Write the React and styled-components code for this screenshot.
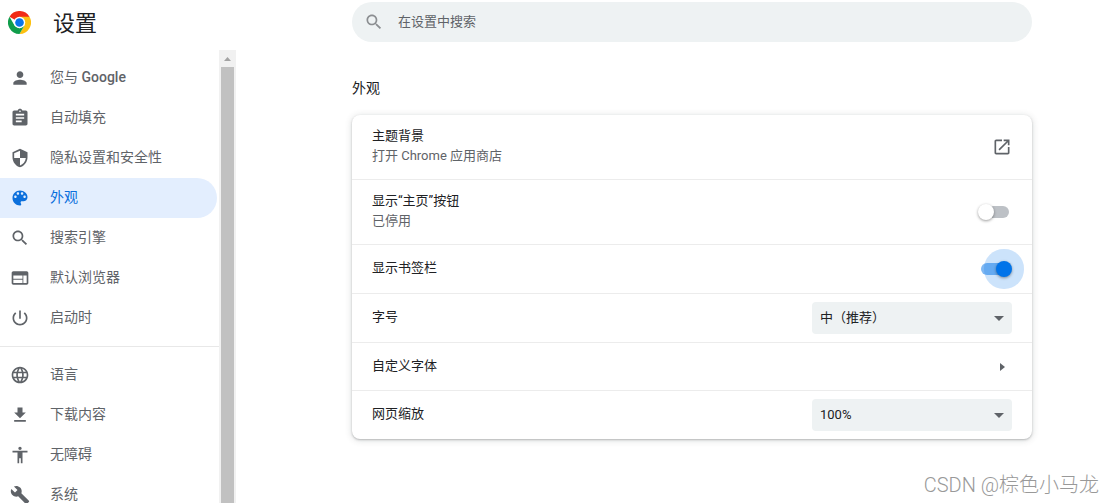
import React, { useState } from "react";
import styled, { createGlobalStyle } from "styled-components";

const icons = {
  person: "M12 12c2.21 0 4-1.79 4-4s-1.79-4-4-4-4 1.79-4 4 1.79 4 4 4zm0 2c-2.67 0-8 1.34-8 4v2h16v-2c0-2.66-5.33-4-8-4z",
  autofill: "M19 3h-4.18C14.4 1.84 13.3 1 12 1c-1.3 0-2.4.84-2.82 2H5c-1.1 0-2 .9-2 2v14c0 1.1.9 2 2 2h14c1.1 0 2-.9 2-2V5c0-1.1-.9-2-2-2zm-7 0c.55 0 1 .45 1 1s-.45 1-1 1-1-.45-1-1 .45-1 1-1zm2 14H7v-2h7v2zm3-4H7v-2h10v2zm0-4H7V7h10v2z",
  security: "M12 1L3 5v6c0 5.55 3.84 10.74 9 12 5.16-1.26 9-6.45 9-12V5l-9-4zm0 10.99h7c-.53 4.12-3.28 7.79-7 8.94V12H5V6.3l7-3.11v8.8z",
  palette: "M12 3c-4.97 0-9 4.03-9 9s4.03 9 9 9c.83 0 1.5-.67 1.5-1.5 0-.39-.15-.74-.39-1.01-.23-.26-.38-.61-.38-.99 0-.83.67-1.5 1.5-1.5H16c2.76 0 5-2.24 5-5 0-4.42-4.03-8-9-8zm-5.5 9c-.83 0-1.5-.67-1.5-1.5S5.67 9 6.5 9 8 9.67 8 10.5 7.33 12 6.5 12zm3-4C8.67 8 8 7.33 8 6.5S8.67 5 9.5 5s1.5.67 1.5 1.5S10.33 8 9.5 8zm5 0c-.83 0-1.5-.67-1.5-1.5S13.67 5 14.5 5s1.5.67 1.5 1.5S15.33 8 14.5 8zm3 4c-.83 0-1.5-.67-1.5-1.5S16.67 9 17.5 9s1.5.67 1.5 1.5-.67 1.5-1.5 1.5z",
  search: "M15.5 14h-.79l-.28-.27C15.41 12.59 16 11.11 16 9.5 16 5.91 13.09 3 9.5 3S3 5.91 3 9.5 5.91 16 9.5 16c1.61 0 3.09-.59 4.23-1.57l.27.28v.79l5 4.99L20.49 19l-4.99-5zm-6 0C7.01 14 5 11.99 5 9.5S7.01 5 9.5 5 14 7.01 14 9.5 11.99 14 9.5 14z",
  browser: "M20 4H4c-1.1 0-1.99.9-1.99 2L2 18c0 1.1.9 2 2 2h16c1.1 0 2-.9 2-2V6c0-1.1-.9-2-2-2zm-5 14H4v-4h11v4zm0-5H4V9h11v4zm5 5h-4V9h4v9z",
  power: "M13 3h-2v10h2V3zm4.83 2.17l-1.42 1.42C17.99 7.86 19 9.81 19 12c0 3.87-3.13 7-7 7s-7-3.13-7-7c0-2.19 1.01-4.14 2.58-5.42L6.17 5.17C4.23 6.82 3 9.26 3 12c0 4.97 4.03 9 9 9s9-4.03 9-9c0-2.74-1.23-5.18-3.17-6.83z",
  language: "M11.99 2C6.47 2 2 6.48 2 12s4.47 10 9.99 10C17.52 22 22 17.52 22 12S17.52 2 11.99 2zm6.93 6h-2.95c-.32-1.25-.78-2.45-1.38-3.56 1.84.63 3.37 1.91 4.33 3.56zM12 4.04c.83 1.2 1.48 2.53 1.91 3.96h-3.82c.43-1.43 1.08-2.76 1.91-3.96zM4.26 14C4.1 13.36 4 12.69 4 12s.1-1.36.26-2h3.38c-.08.66-.14 1.32-.14 2 0 .68.06 1.34.14 2H4.26zm.82 2h2.95c.32 1.25.78 2.45 1.38 3.56-1.84-.63-3.37-1.9-4.33-3.56zm2.95-8H5.08c.96-1.66 2.49-2.93 4.33-3.56C8.81 5.55 8.35 6.75 8.03 8zM12 19.96c-.83-1.2-1.48-2.53-1.91-3.96h3.82c-.43 1.43-1.08 2.76-1.91 3.96zM14.34 14H9.66c-.09-.66-.16-1.32-.16-2 0-.68.07-1.35.16-2h4.68c.09.65.16 1.32.16 2 0 .68-.07 1.34-.16 2zm.25 5.56c.6-1.11 1.06-2.31 1.38-3.56h2.95c-.96 1.65-2.49 2.93-4.33 3.56zM16.36 14c.08-.66.14-1.32.14-2 0-.68-.06-1.34-.14-2h3.38c.16.64.26 1.31.26 2s-.1 1.36-.26 2h-3.38z",
  download: "M19 9h-4V3H9v6H5l7 7 7-7zM5 18v2h14v-2H5z",
  accessibility: "M12 2c1.1 0 2 .9 2 2s-.9 2-2 2-2-.9-2-2 .9-2 2-2zm9 7h-6v13h-2v-6h-2v6H9V9H3V7h18v2z",
  build: "M22.7 19l-9.1-9.1c.9-2.3.4-5-1.5-6.9-2-2-5-2.4-7.4-1.3L9 6 6 9 1.6 4.7C.4 7.1.9 10.1 2.9 12.1c1.9 1.9 4.6 2.4 6.9 1.5l9.1 9.1c.4.4 1 .4 1.4 0l2.3-2.3c.5-.4.5-1.1.1-1.4z",
  external: "M19 19H5V5h7V3H5c-1.11 0-2 .9-2 2v14c0 1.1.89 2 2 2h14c1.1 0 2-.9 2-2v-7h-2v7zM14 3v2h3.59l-9.83 9.83 1.41 1.41L19 6.41V10h2V3h-7z",
};

const menuPrincipal = [
  { id: "people", icon: "person", label: "您与 ", latin: "Google" },
  { id: "autofill", icon: "autofill", label: "自动填充" },
  { id: "privacy", icon: "security", label: "隐私设置和安全性" },
  { id: "appearance", icon: "palette", label: "外观" },
  { id: "search", icon: "search", label: "搜索引擎" },
  { id: "browser", icon: "browser", label: "默认浏览器" },
  { id: "startup", icon: "power", label: "启动时" },
];

const menuAdvanced = [
  { id: "languages", icon: "language", label: "语言" },
  { id: "downloads", icon: "download", label: "下载内容" },
  { id: "accessibility", icon: "accessibility", label: "无障碍" },
  { id: "system", icon: "build", label: "系统" },
];

const Icon = ({ name }) => (
  <IconSvg viewBox="0 0 24 24" aria-hidden="true">
    <path d={icons[name]} />
  </IconSvg>
);

const ChromeLogo = () => (
  <Logo viewBox="0 0 48 48" aria-hidden="true">
    <path fill="#f12b16" d="M24 24 3.2 12A24 24 0 0 1 44.8 12z" />
    <path fill="#fcc010" d="M24 12H44.8A24 24 0 0 1 24 48L34.4 30z" />
    <path fill="#109d4b" d="M3.2 12 13.6 30 24 36 34.4 30 24 48A24 24 0 0 1 3.2 12z" />
    <circle cx="24" cy="24" r="12" fill="#fff" />
    <circle cx="24" cy="24" r="9" fill="#0b74e8" />
  </Logo>
);

const Menu = ({ items, active, onSelect }) =>
  items.map((item) => (
    <MenuLink
      key={item.id}
      href={`#${item.id}`}
      $active={item.id === active}
      onClick={() => onSelect(item.id)}
    >
      <Icon name={item.icon} />
      <MenuText>
        {item.label}
        {item.latin && <Latin>{item.latin}</Latin>}
      </MenuText>
    </MenuLink>
  ));

const App = () => {
  const [active, setActive] = useState("appearance");
  const [homeButton, setHomeButton] = useState(false);
  const [bookmarks, setBookmarks] = useState(true);
  const [fontSize, setFontSize] = useState("medium");
  const [zoom, setZoom] = useState("100");

  return (
    <Page>
      <GlobalStyle />
      <Side>
        <Header>
          <ChromeLogo />
          <Title>设置</Title>
        </Header>
        <SideBody>
          <Nav>
            <Menu items={menuPrincipal} active={active} onSelect={setActive} />
            <Separator />
            <Menu items={menuAdvanced} active={active} onSelect={setActive} />
          </Nav>
          <Scrollbar>
            <ScrollButton type="button" aria-label="向上滚动">
              <svg width="7" height="4" viewBox="0 0 7 4"><path d="M0 4 3.5 0 7 4z" /></svg>
            </ScrollButton>
            <Thumb />
          </Scrollbar>
        </SideBody>
      </Side>

      <Main>
        <Content>
          <SearchBox>
            <Icon name="search" />
            <SearchInput type="text" aria-label="在设置中搜索" placeholder="在设置中搜索" />
          </SearchBox>

          <SectionTitle>外观</SectionTitle>
          <Card>
            <Row $height="64px">
              <Texts>
                <Label as="span">主题背景</Label>
                <Sub>打开 Chrome 应用商店</Sub>
              </Texts>
              <IconButton type="button" aria-label="主题背景">
                <Icon name="external" />
              </IconButton>
            </Row>
            <Row $height="64px">
              <Texts>
                <Label htmlFor="home">显示“主页”按钮</Label>
                <Sub>{homeButton ? "已启用" : "已停用"}</Sub>
              </Texts>
              <Toggle id="home" checked={homeButton} onChange={(e) => setHomeButton(e.target.checked)} />
            </Row>
            <Row>
              <Texts>
                <Label htmlFor="bookmarks">显示书签栏</Label>
              </Texts>
              <Toggle id="bookmarks" $ripple checked={bookmarks} onChange={(e) => setBookmarks(e.target.checked)} />
            </Row>
            <Row>
              <Texts>
                <Label htmlFor="font-size">字号</Label>
              </Texts>
              <SelectBox>
                <Select id="font-size" value={fontSize} onChange={(e) => setFontSize(e.target.value)}>
                  <option value="medium">中（推荐）</option>
                </Select>
                <Arrow width="10" height="5" viewBox="0 0 10 5"><path d="M0 0h10L5 5z" /></Arrow>
              </SelectBox>
            </Row>
            <Row $height="47px">
              <Texts>
                <Label as="span">自定义字体</Label>
              </Texts>
              <IconButton type="button" aria-label="自定义字体">
                <svg width="5" height="8" viewBox="0 0 5 8"><path d="M0 0l5 4-5 4z" /></svg>
              </IconButton>
            </Row>
            <Row>
              <Texts>
                <Label htmlFor="zoom">网页缩放</Label>
              </Texts>
              <SelectBox>
                <Select id="zoom" value={zoom} onChange={(e) => setZoom(e.target.value)}>
                  <option value="100">100%</option>
                </Select>
                <Arrow width="10" height="5" viewBox="0 0 10 5"><path d="M0 0h10L5 5z" /></Arrow>
              </SelectBox>
            </Row>
          </Card>
        </Content>
      </Main>
      <Watermark>CSDN @棕色小马龙</Watermark>
    </Page>
  );
};

export default App;

const GlobalStyle = createGlobalStyle`
  * {
    box-sizing: border-box;
  }
  body {
    margin: 0;
    background: #fff;
    color: #202124;
    font-family: Roboto, "Noto Sans CJK SC", sans-serif;
    font-size: 13px;
    line-height: 20px;
  }
  button, input, select {
    font: inherit;
    color: inherit;
  }
`;

const Page = styled.div`
  position: relative;
  display: flex;
  height: 100vh;
  overflow: hidden;
`;

const Side = styled.aside`
  display: flex;
  flex-direction: column;
  flex: 0 0 236px;
`;

const Header = styled.header`
  display: flex;
  align-items: center;
  gap: 22px;
  flex: none;
  height: 50px;
  padding: 0 8px 6px;
`;

const Logo = styled.svg`
  width: 23px;
  height: 23px;
`;

const Title = styled.h1`
  margin: 0;
  padding-top: 4px;
  font-size: 22px;
  font-weight: 400;
  line-height: 32px;
`;

const SideBody = styled.div`
  display: flex;
  flex: 1;
  min-height: 0;
`;

const Nav = styled.nav`
  flex: 1;
  padding-top: 8px;
  overflow: hidden;
`;

const MenuLink = styled.a`
  display: flex;
  align-items: center;
  gap: 20px;
  height: 40px;
  margin-right: 2px;
  padding-left: 10px;
  border-radius: 0 20px 20px 0;
  background: ${({ $active }) => ($active ? "#e3eefe" : "transparent")};
  color: ${({ $active }) => ($active ? "#0b6fdc" : "#5f6368")};
  font-size: 14px;
  text-decoration: none;
`;

const MenuText = styled.span`
  padding-bottom: 2px;
`;

const Latin = styled.span`
  font-weight: 500;
`;

const Separator = styled.hr`
  height: 1px;
  margin: 8px 0;
  border: 0;
  background: #e8e8e8;
`;

const Scrollbar = styled.div`
  display: flex;
  flex-direction: column;
  width: 17px;
  background: #f1f1f1;
`;

const ScrollButton = styled.button`
  display: flex;
  align-items: center;
  justify-content: center;
  height: 17px;
  padding: 0;
  border: 0;
  background: none;
  fill: #a3a3a3;
`;

const Thumb = styled.div`
  flex: 1;
  margin: 0 2px;
  background: #c1c1c1;
`;

const IconSvg = styled.svg`
  flex: none;
  width: 20px;
  height: 20px;
  fill: currentColor;
`;

const Main = styled.main`
  flex: 1;
  min-width: 0;
  padding: 2px 0 0 34px;
`;

const Content = styled.div`
  max-width: 680px;
  margin: 0 auto;
`;

const SearchBox = styled.div`
  display: flex;
  align-items: center;
  gap: 14px;
  height: 40px;
  padding: 0 12px;
  border-radius: 20px;
  background: #eef2f3;
  color: #8b8e91;
`;

const SearchInput = styled.input`
  flex: 1;
  padding: 0;
  border: 0;
  outline: none;
  background: none;
  color: #202124;

  &::placeholder {
    color: #5f6368;
  }
`;

const SectionTitle = styled.h2`
  margin: 36px 0 17px;
  font-size: 14px;
  font-weight: 400;
  line-height: 20px;
`;

const Card = styled.section`
  border-radius: 8px;
  background: #fff;
  box-shadow: 0 1px 2px rgba(60, 64, 67, 0.3), 0 1px 6px 1px rgba(60, 64, 67, 0.15);
`;

const Row = styled.div`
  display: flex;
  align-items: center;
  justify-content: space-between;
  min-height: ${({ $height }) => $height || "48px"};
  padding: 0 20px;
  box-sizing: content-box;

  & + & {
    border-top: 1px solid #ececec;
  }
`;

const Texts = styled.div`
  display: flex;
  flex-direction: column;
  padding-bottom: 2px;
`;

const Label = styled.label`
  color: #202124;
`;

const Sub = styled.span`
  color: #5f6368;
`;

const IconButton = styled.button`
  display: flex;
  align-items: center;
  justify-content: center;
  width: 20px;
  height: 20px;
  padding: 0;
  border: 0;
  background: none;
  color: #5f6368;
  fill: #5f6368;
`;

const Toggle = styled.input.attrs({ type: "checkbox", role: "switch" })`
  appearance: none;
  position: relative;
  width: 34px;
  height: 16px;
  margin: 0;

  &::before {
    content: "";
    position: absolute;
    inset: 2px 3px;
    border-radius: 6px;
    background: ${({ checked }) => (checked ? "#7fb8f3" : "#bdc1c6")};
  }

  &::after {
    content: "";
    position: absolute;
    top: 0;
    left: ${({ checked }) => (checked ? "18px" : "0")};
    width: 16px;
    height: 16px;
    border-radius: 50%;
    background: ${({ checked }) => (checked ? "#0073e9" : "#fff")};
    box-shadow: 0 1px 3px rgba(0, 0, 0, 0.4)
      ${({ $ripple }) => $ripple && ", 0 0 0 12px rgba(0, 115, 233, 0.2)"};
  }
`;

const SelectBox = styled.div`
  position: relative;
  width: 200px;
`;

const Select = styled.select`
  appearance: none;
  display: block;
  width: 100%;
  height: 32px;
  padding: 0 24px 0 8px;
  border: 0;
  border-radius: 4px;
  background: #eef2f3;
`;

const Arrow = styled.svg`
  position: absolute;
  top: 14px;
  right: 8px;
  fill: #5f6368;
  pointer-events: none;
`;

const Watermark = styled.div`
  position: absolute;
  right: 15px;
  bottom: 4px;
  color: #999;
  font-size: 20px;
  font-weight: 300;
  line-height: 28px;
`;
